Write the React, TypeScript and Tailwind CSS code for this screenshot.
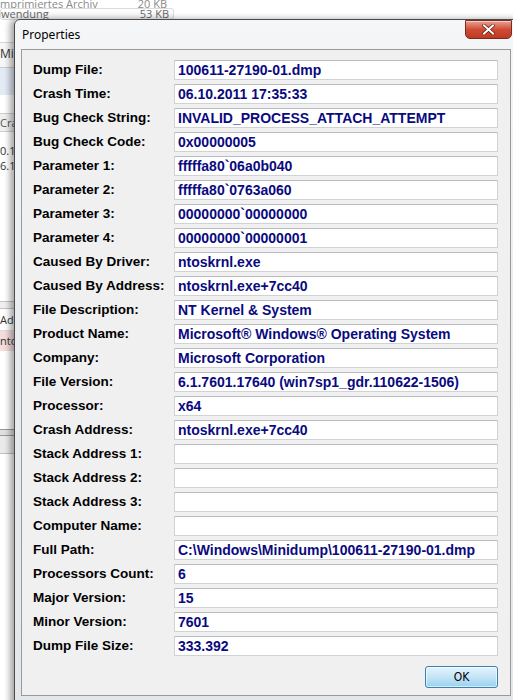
import React from "react";

interface Field {
  label: string;
  value: string;
}

const fields: Field[] = [
  { label: "Dump File:", value: "100611-27190-01.dmp" },
  { label: "Crash Time:", value: "06.10.2011 17:35:33" },
  { label: "Bug Check String:", value: "INVALID_PROCESS_ATTACH_ATTEMPT" },
  { label: "Bug Check Code:", value: "0x00000005" },
  { label: "Parameter 1:", value: "fffffa80`06a0b040" },
  { label: "Parameter 2:", value: "fffffa80`0763a060" },
  { label: "Parameter 3:", value: "00000000`00000000" },
  { label: "Parameter 4:", value: "00000000`00000001" },
  { label: "Caused By Driver:", value: "ntoskrnl.exe" },
  { label: "Caused By Address:", value: "ntoskrnl.exe+7cc40" },
  { label: "File Description:", value: "NT Kernel & System" },
  { label: "Product Name:", value: "Microsoft® Windows® Operating System" },
  { label: "Company:", value: "Microsoft Corporation" },
  { label: "File Version:", value: "6.1.7601.17640 (win7sp1_gdr.110622-1506)" },
  { label: "Processor:", value: "x64" },
  { label: "Crash Address:", value: "ntoskrnl.exe+7cc40" },
  { label: "Stack Address 1:", value: "" },
  { label: "Stack Address 2:", value: "" },
  { label: "Stack Address 3:", value: "" },
  { label: "Computer Name:", value: "" },
  { label: "Full Path:", value: "C:\\Windows\\Minidump\\100611-27190-01.dmp" },
  { label: "Processors Count:", value: "6" },
  { label: "Major Version:", value: "15" },
  { label: "Minor Version:", value: "7601" },
  { label: "Dump File Size:", value: "333.392" },
];

// the explorer window peeking out behind the dialog
function Backdrop() {
  return (
    <div className="flex flex-col w-full h-full bg-white text-[11px] text-[#333] font-['Open_Sans',sans-serif]">
      <div className="h-[8px] flex items-end leading-[8px] overflow-hidden text-[#8a8a8a]">
        <span>mprimiertes Archiv</span>
        <span className="ml-[40px]">20 KB</span>
      </div>
      <div className="h-[12px] w-[174px] flex items-center leading-[10px] border border-[#dcdcdc] rounded-[3px] bg-gradient-to-b from-white to-[#f2f2f2] overflow-hidden text-[#666]">
        <span>wendung</span>
        <span className="ml-auto mr-[4px]">53 KB</span>
      </div>
      <div className="h-[23px] w-[14px] border-b border-[#d6d6d6]" />
      <div className="h-[25px] w-[14px] border-b border-[#ccc] bg-[#f7f7f8] leading-[22px] text-[12px] overflow-hidden">Mi</div>
      <div className="h-[27px] w-[14px] bg-[#e3ebf6]" />
      <div className="h-[18px] w-[14px]" />
      <div className="h-[19px] w-[14px] bg-[#f0f0f0] border-y border-[#d0d0d0] leading-[17px] overflow-hidden text-[#555]">Cras</div>
      <div className="h-[11px] w-[14px]" />
      <div className="h-[15px] w-[14px] leading-[15px] overflow-hidden">0.1</div>
      <div className="h-[15px] w-[14px] leading-[15px] overflow-hidden">6.1</div>
      <div className="h-[128px] w-[14px]" />
      <div className="h-[8px] w-[14px] bg-[#efefef] border-y border-[#c4c4c4]" />
      <div className="h-[22px] w-[14px] leading-[22px] overflow-hidden border-b border-[#ddd]">Add</div>
      <div className="h-[20px] w-[14px] bg-[#f6dcdc] leading-[20px] overflow-hidden">ntos</div>
      <div className="h-[78px] w-[14px]" />
      <div className="h-[7px] w-[14px] border-y border-[#999] bg-[#e0e0e0]" />
      <div className="h-[18px] w-[14px] bg-[#ebebeb] border-b border-[#c0c0c0]" />
    </div>
  );
}

function CloseButton() {
  return (
    <div className="absolute left-[450px] top-0 w-[47px] h-[19px] rounded-b-[5px] border border-[#7a2a1f] bg-gradient-to-b from-[#e8a093] via-[#cf4b33] to-[#c03a22] flex items-center justify-center shadow-[inset_0_1px_0_rgba(255,255,255,0.5)]">
      <svg width="13" height="11" viewBox="0 0 13 11">
        <path
          d="M2 1.5 L11 9.5 M11 1.5 L2 9.5"
          stroke="#5a1a10"
          strokeWidth="3.4"
          strokeLinecap="square"
        />
        <path
          d="M2 1.5 L11 9.5 M11 1.5 L2 9.5"
          stroke="#ffffff"
          strokeWidth="2"
          strokeLinecap="square"
        />
      </svg>
    </div>
  );
}

export default function App() {
  return (
    <div className="relative w-[513px] h-[700px] overflow-hidden bg-white">
      <Backdrop />

      {/* dialog window */}
      <div className="absolute left-[14px] top-[19px] w-[510px] h-[700px] border border-[#4a4a4a] rounded-tl-[6px] bg-gradient-to-b from-[#f4f6f8] via-[#e9ecef] to-[#e4e7ea] shadow-[-4px_0_6px_rgba(0,0,0,0.35)]">
        <CloseButton />
        <div className="h-[29px] flex items-center pl-[7px] text-[12px] text-black font-['Noto_Sans','Open_Sans',sans-serif]">
          Properties
        </div>

        <div className="ml-[6px] w-[490px] h-[647px] border border-[#9a9a9a] bg-[#f0f0f0] pt-[10px] pl-[11px]">
          <div className="flex flex-col gap-[4px]">
            {fields.map((f, i) => (
              <div key={i} className="flex items-center h-[20px]">
                <div className="w-[141px] text-[13.5px] font-bold text-black font-['Liberation_Sans',Arial,sans-serif] leading-none whitespace-nowrap">
                  {f.label}
                </div>
                <div className="w-[324px] h-[20px] bg-white border border-[#d0d3d6] border-t-[#b9bdc1] flex items-center pl-[3px] text-[14px] font-bold text-[#0a0a80] font-['Liberation_Sans',Arial,sans-serif] leading-none whitespace-nowrap overflow-hidden">
                  {f.value}
                </div>
              </div>
            ))}
          </div>

          <div className="flex justify-end w-[465px] mt-[10px]">
            <button className="w-[73px] h-[22px] rounded-[3px] border border-[#3c7fb1] bg-gradient-to-b from-[#e5f4fc] via-[#c4e5f6] to-[#98d1ef] text-[12px] text-black font-['DejaVu_Sans_Condensed','DejaVu_Sans',sans-serif] shadow-[inset_0_0_0_1px_rgba(255,255,255,0.6)]">
              OK
            </button>
          </div>
        </div>
      </div>
    </div>
  );
}
